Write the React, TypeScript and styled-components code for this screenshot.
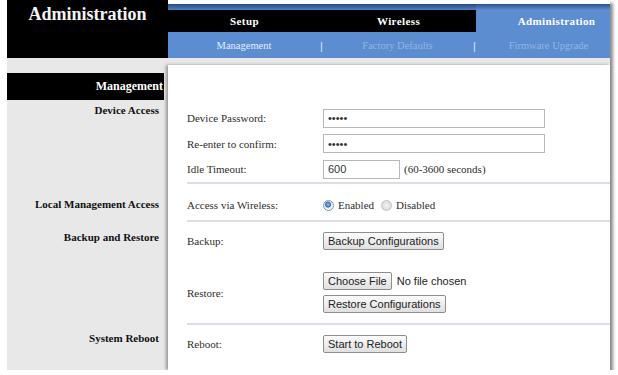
import React from "react";
import styled, { createGlobalStyle } from "styled-components";

const GlobalStyle = createGlobalStyle`
  html, body {
    margin: 0;
    padding: 0;
    background: #fff;
  }
  body {
    font-family: "Liberation Serif", "Times New Roman", serif;
  }
`;

const BLUE = "#5b8dd0";

const Frame = styled.div`
  width: 603px;
  margin-left: 7px;
  box-shadow: 3px 3px 3px rgba(0, 0, 0, 0.45);
`;

const Header = styled.header`
  display: flex;
  height: 58px;
`;

const Brand = styled.div`
  width: 161px;
  box-sizing: border-box;
  padding-top: 4px;
  background: #000;
  color: #f4f4f4;
  font-weight: bold;
  font-size: 18px;
  line-height: 21px;
  text-align: center;
`;

const Nav = styled.nav`
  flex: 1;
  display: flex;
  flex-direction: column;
  padding-top: 4px;
  background: #fff;
`;

const Tabs = styled.div`
  display: flex;
  height: 28px;
`;

const Tab = styled.div<{ $w: number; $active?: boolean; $shift?: number }>`
  width: ${(p) => p.$w}px;
  box-sizing: border-box;
  padding: 10px 0 0 ${(p) => p.$shift ?? 0}px;
  background: ${(p) =>
    p.$active
      ? `linear-gradient(#2c548f, ${BLUE}) 0 0 / 100% 6px no-repeat, ${BLUE}`
      : "linear-gradient(#234a84, #4f7fc2) 0 0 / 100% 6px no-repeat, #000"};
  color: #fff;
  font-weight: bold;
  font-size: 11px;
  letter-spacing: 0.4px;
  line-height: 14px;
  text-align: center;
`;

const SubNav = styled.div`
  display: flex;
  height: 26px;
  background: ${BLUE};
  line-height: 14px;
  padding-top: 7px;
  box-sizing: border-box;
`;

const SubItem = styled.div<{ $w: number; $current?: boolean; $shift?: number }>`
  width: ${(p) => p.$w}px;
  box-sizing: border-box;
  padding-left: ${(p) => p.$shift ?? 0}px;
  text-align: center;
  font-size: 10.5px;
  color: ${(p) => (p.$current ? "#e4edff" : "#93b5e4")};
`;

const SubDivider = styled.span`
  width: 2px;
  text-align: center;
  font-family: "Liberation Sans", Arial, sans-serif;
  font-size: 11px;
  color: #dbe7ff;
`;

const Body = styled.div`
  display: flex;
  background: #e8e8e8;
`;

const Sidebar = styled.aside`
  width: 161px;
  display: flex;
  flex-direction: column;
`;

const SideTitle = styled.div`
  margin: 15px 4px 0 0;
  height: 27px;
  padding-right: 1px;
  background: #000;
  color: #fff;
  font-weight: bold;
  font-size: 12px;
  line-height: 27px;
  text-align: right;
`;

const SideSection = styled.div<{ $h: number; $top: number }>`
  height: ${(p) => p.$h}px;
  box-sizing: border-box;
  padding: ${(p) => p.$top}px 9px 0 0;
  text-align: right;
  font-weight: bold;
  font-size: 11px;
  line-height: 12px;
  color: #111;
`;

const Panel = styled.main`
  flex: 1;
  margin-top: 7px;
  padding-left: 19px;
  background: #fff;
  box-shadow: -2px 0 3px rgba(0, 0, 0, 0.35);
`;

const PanelTop = styled.div`
  height: 35px;
`;

const Section = styled.section<{ $h: number; $top: number; $last?: boolean }>`
  height: ${(p) => p.$h}px;
  box-sizing: border-box;
  padding-top: ${(p) => p.$top}px;
  border-bottom: ${(p) => (p.$last ? "none" : "2px solid #dcdcec")};
`;

const Row = styled.div<{ $h?: number; $gap?: number }>`
  display: grid;
  grid-template-columns: 136px auto;
  align-items: center;
  height: ${(p) => (p.$h ? `${p.$h}px` : "auto")};
  margin-top: ${(p) => p.$gap ?? 0}px;
`;

const Label = styled.span`
  font-size: 11px;
  color: #2e2e2e;
`;

const Field = styled.div`
  display: flex;
  align-items: center;
`;

const Stack = styled.div`
  display: flex;
  flex-direction: column;
  gap: 5px;
`;

const TextInput = styled.input<{ $w: number }>`
  width: ${(p) => p.$w}px;
  height: 19px;
  box-sizing: border-box;
  margin: 0;
  padding: 0 4px;
  border: 1px solid #b8b8b8;
  outline: none;
  background: #fff;
  font-family: "Liberation Sans", Arial, sans-serif;
  font-size: 11px;
  color: #333;
`;

const Hint = styled.span`
  margin-left: 4px;
  font-size: 11px;
  color: #2e2e2e;
`;

const Radio = styled.span<{ $on?: boolean }>`
  width: 11px;
  height: 11px;
  box-sizing: border-box;
  border-radius: 50%;
  border: 1px solid ${(p) => (p.$on ? "#7f97b6" : "#c2c2c2")};
  background: ${(p) =>
    p.$on
      ? "radial-gradient(circle at 45% 40%, #9fc3ee 0, #3b6db3 2.5px, #e9eef5 3.5px, #f4f6f9 5px)"
      : "radial-gradient(circle at 50% 50%, #f4f4f4 0, #dadada 5px)"};
`;

const Option = styled.label`
  display: flex;
  align-items: center;
  gap: 4px;
  margin-right: 7px;
  font-size: 11px;
  color: #2e2e2e;
`;

const Button = styled.button`
  height: 18px;
  margin: 0;
  padding: 0 4px;
  border: 1px solid #8e8e8e;
  border-radius: 2px;
  background: linear-gradient(#fbfbfb, #e0e0e0);
  font-family: "Liberation Sans", Arial, sans-serif;
  font-size: 11px;
  line-height: 16px;
  color: #222;
`;

const FileNote = styled.span`
  margin-left: 5px;
  font-family: "Liberation Sans", Arial, sans-serif;
  font-size: 11px;
  color: #222;
`;

const sections = [
  { side: "Device Access", h: 84, sideTop: 4 },
  { side: "Local Management Access", h: 38, sideTop: 14 },
  { side: "Backup and Restore", h: 103, sideTop: 9 },
  { side: "System Reboot", h: 45, sideTop: 7 },
];

export default function App() {
  return (
    <>
      <GlobalStyle />
      <Frame>
        <Header>
          <Brand>Administration</Brand>
          <Nav>
            <Tabs>
              <Tab $w={153}>Setup</Tab>
              <Tab $w={155}>Wireless</Tab>
              <Tab $w={134} $active $shift={27}>
                Administration
              </Tab>
            </Tabs>
            <SubNav>
              <SubItem $w={152} $current>
                Management
              </SubItem>
              <SubDivider>|</SubDivider>
              <SubItem $w={151}>Factory Defaults</SubItem>
              <SubDivider>|</SubDivider>
              <SubItem $w={135} $shift={12}>
                Firmware Upgrade
              </SubItem>
            </SubNav>
          </Nav>
        </Header>

        <Body>
          <Sidebar>
            <SideTitle>Management</SideTitle>
            {sections.map((s) => (
              <SideSection key={s.side} $h={s.h} $top={s.sideTop}>
                {s.side}
              </SideSection>
            ))}
          </Sidebar>

          <Panel>
            <PanelTop />
            <Section $h={84} $top={5}>
              <Row $h={26}>
                <Label>Device Password:</Label>
                <Field>
                  <TextInput $w={222} type="password" defaultValue="admin" readOnly />
                </Field>
              </Row>
              <Row $h={25}>
                <Label>Re-enter to confirm:</Label>
                <Field>
                  <TextInput $w={222} type="password" defaultValue="admin" readOnly />
                </Field>
              </Row>
              <Row $h={26}>
                <Label>Idle Timeout:</Label>
                <Field>
                  <TextInput $w={77} type="text" defaultValue="600" readOnly />
                  <Hint>(60-3600 seconds)</Hint>
                </Field>
              </Row>
            </Section>

            <Section $h={38} $top={12}>
              <Row $h={18}>
                <Label>Access via Wireless:</Label>
                <Field>
                  <Option>
                    <Radio $on />
                    Enabled
                  </Option>
                  <Option>
                    <Radio />
                    Disabled
                  </Option>
                </Field>
              </Row>
            </Section>

            <Section $h={103} $top={10}>
              <Row $h={18}>
                <Label>Backup:</Label>
                <Field>
                  <Button>Backup Configurations</Button>
                </Field>
              </Row>
              <Row $gap={22}>
                <Label>Restore:</Label>
                <Stack>
                  <Field>
                    <Button>Choose File</Button>
                    <FileNote>No file chosen</FileNote>
                  </Field>
                  <Field>
                    <Button>Restore Configurations</Button>
                  </Field>
                </Stack>
              </Row>
            </Section>

            <Section $h={45} $top={10} $last>
              <Row $h={18}>
                <Label>Reboot:</Label>
                <Field>
                  <Button>Start to Reboot</Button>
                </Field>
              </Row>
            </Section>
          </Panel>
        </Body>
      </Frame>
    </>
  );
}
